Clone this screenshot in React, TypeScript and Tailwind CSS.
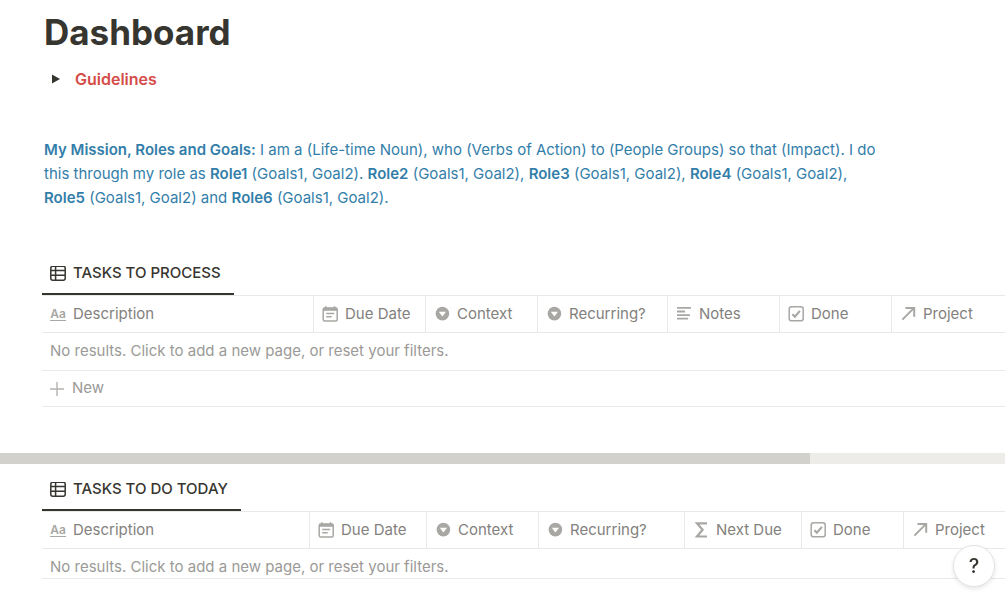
import type { ReactNode } from "react";

type IconName = "title" | "date" | "select" | "text" | "checkbox" | "relation" | "formula";

interface Column {
  label: string;
  icon: IconName;
  width: string;
}

const PROCESS_COLUMNS: Column[] = [
  { label: "Description", icon: "title", width: "w-[271px]" },
  { label: "Due Date", icon: "date", width: "w-28" },
  { label: "Context", icon: "select", width: "w-28" },
  { label: "Recurring?", icon: "select", width: "w-[130px]" },
  { label: "Notes", icon: "text", width: "w-28" },
  { label: "Done", icon: "checkbox", width: "w-28" },
  { label: "Project", icon: "relation", width: "w-auto" },
];

const TODAY_COLUMNS: Column[] = [
  { label: "Description", icon: "title", width: "w-[267px]" },
  { label: "Due Date", icon: "date", width: "w-[117px]" },
  { label: "Context", icon: "select", width: "w-28" },
  { label: "Recurring?", icon: "select", width: "w-[146px]" },
  { label: "Next Due", icon: "formula", width: "w-[117px]" },
  { label: "Done", icon: "checkbox", width: "w-[102px]" },
  { label: "Project", icon: "relation", width: "w-auto" },
];

function PropertyIcon({ name }: { name: IconName }) {
  if (name === "title") {
    return (
      <span
        aria-hidden="true"
        className="w-4 shrink-0 border-b border-[#a8a7a3] text-center text-[12px] font-semibold leading-[12px] text-[#a8a7a3]"
      >
        Aa
      </span>
    );
  }
  return (
    <svg viewBox="0 0 16 16" className="size-4 shrink-0 text-[#a8a7a3]" fill="none" stroke="currentColor" aria-hidden="true">
      {name === "date" && (
        <>
          <rect x="1.2" y="2" width="14" height="13" rx="1.5" strokeWidth="1.5" />
          <path d="M1.2 1.8h14v3h-14z" fill="currentColor" stroke="none" />
          <path d="M3.9 0.3v2M12.5 0.3v2" strokeWidth="1.5" />
          <path d="M4.2 7.5h8M4.2 10.8h5.5" strokeWidth="1.5" />
        </>
      )}
      {name === "select" && (
        <>
          <circle cx="8.4" cy="7.6" r="6.8" fill="currentColor" stroke="none" />
          <path d="M4.8 5.7H12L8.4 10.6z" fill="#fff" stroke="none" />
        </>
      )}
      {name === "text" && <path d="M1 1.9h14M1 5.5h8M1 9.1h13M1 12.7h11" strokeWidth="1.8" />}
      {name === "checkbox" && (
        <>
          <rect x="1.2" y="0.8" width="14" height="14" rx="2.4" strokeWidth="1.5" />
          <path d="M4.4 8.2l2.5 2.5 5-5.8" strokeWidth="2.2" />
        </>
      )}
      {name === "relation" && <path d="M2.4 13.6L13.6 2.4M5.4 2h8.8v8.8" strokeWidth="2" />}
      {name === "formula" && <path d="M14 1.3H4L9.6 7.8L4 14.5h10" strokeWidth="2.2" />}
    </svg>
  );
}

function TableIcon() {
  return (
    <svg viewBox="0 0 16 16" className="size-4 shrink-0" fill="none" stroke="currentColor" strokeWidth="1.5" aria-hidden="true">
      <rect x="0.8" y="0.2" width="14.4" height="14" rx="2" />
      <path d="M1 4.6h14M1 9.3h14M5.6 0.4v13.6" />
    </svg>
  );
}

function Database({ title, columns, children }: { title: string; columns: Column[]; children: ReactNode }) {
  return (
    <section className="pl-[42px]">
      <h2 className="flex">
        <button
          type="button"
          className="flex h-[43px] items-center gap-[7px] border-b-2 border-[#37352f] pl-2 pr-[13px] pt-0.5 text-[15px] font-medium"
        >
          <TableIcon />
          {title}
        </button>
      </h2>
      <table className="w-full table-fixed border-separate border-spacing-0 text-left text-[15px]">
        <thead>
          <tr className="h-[38px] text-[#83817d]">
            {columns.map((col, i) => (
              <th
                key={col.label}
                scope="col"
                className={`${col.width} border-y border-[#e9e9e7] px-2 py-0 font-normal ${i > 0 ? "border-l" : ""}`}
              >
                <div className="flex items-center gap-[7px] whitespace-nowrap">
                  <PropertyIcon name={col.icon} />
                  {col.label}
                </div>
              </th>
            ))}
          </tr>
        </thead>
        <tbody>{children}</tbody>
      </table>
    </section>
  );
}

function NoResults({ span, className }: { span: number; className: string }) {
  return (
    <tr>
      <td colSpan={span} className={`border-b border-[#e9e9e7] px-2 text-[#9b9a97] ${className}`}>
        No results. Click to add a new page, or reset your filters.
      </td>
    </tr>
  );
}

export default function App() {
  return (
    <div className="min-h-screen overflow-x-hidden bg-white font-['Inter',sans-serif] text-[#37352f]">
      <main>
        <header className="px-11">
          <h1 className="pt-2 text-[35px] font-bold leading-[48px]">Dashboard</h1>
          <button type="button" className="mt-[11px] flex h-6 items-center gap-[15px] pl-2 text-base font-semibold text-[#d44c47]">
            <svg viewBox="0 0 8 10" className="h-[10px] w-2 text-[#37352f]" fill="currentColor" aria-hidden="true">
              <path d="M0 0.5L8 5L0 9.5z" />
            </svg>
            Guidelines
          </button>
          <p className="mt-[47px] max-w-[840px] text-[15px] leading-6 text-[#337ea9]">
            <b className="font-semibold">My Mission, Roles and Goals:</b> I am a (Life-time Noun), who (Verbs of Action) to
            (People Groups) so that (Impact). I do this through my role as <b className="font-semibold">Role1</b> (Goals1,
            Goal2). <b className="font-semibold">Role2</b> (Goals1, Goal2), <b className="font-semibold">Role3</b> (Goals1,
            Goal2), <b className="font-semibold">Role4</b> (Goals1, Goal2), <b className="font-semibold">Role5</b> (Goals1,
            Goal2) and <b className="font-semibold">Role6</b> (Goals1, Goal2).
          </p>
        </header>

        <div className="mt-[42px]">
          <Database title="TASKS TO PROCESS" columns={PROCESS_COLUMNS}>
            <NoResults span={PROCESS_COLUMNS.length} className="h-[38px] py-0" />
            <tr>
              <td colSpan={PROCESS_COLUMNS.length} className="h-9 border-b border-[#e9e9e7] px-2 py-0">
                <button type="button" className="flex items-center gap-2 text-[#9b9a97]">
                  <svg viewBox="0 0 14 14" className="size-[14px] text-[#b4b3b0]" fill="none" stroke="currentColor" strokeWidth="1.4" aria-hidden="true">
                    <path d="M7 0v14M0 7h14" />
                  </svg>
                  New
                </button>
              </td>
            </tr>
          </Database>
        </div>

        {/* horizontal scroll track of the first table */}
        <div className="mt-[46px] h-[11px] bg-[#edece9]">
          <div className="h-full w-[80.6%] bg-[#d3d1cb]" />
        </div>

        <div className="mt-1">
          <Database title="TASKS TO DO TODAY" columns={TODAY_COLUMNS}>
            <NoResults span={TODAY_COLUMNS.length} className="h-[30px] pb-0 pt-[7px] leading-[22px]" />
          </Database>
        </div>
      </main>

      <button
        type="button"
        aria-label="Help"
        className="fixed bottom-[15px] right-[10px] flex size-[42px] items-center justify-center rounded-full border border-[#e3e2e0] bg-white text-[20px] font-medium shadow-[0_2px_4px_rgba(15,15,15,0.1)]"
      >
        ?
      </button>
    </div>
  );
}
